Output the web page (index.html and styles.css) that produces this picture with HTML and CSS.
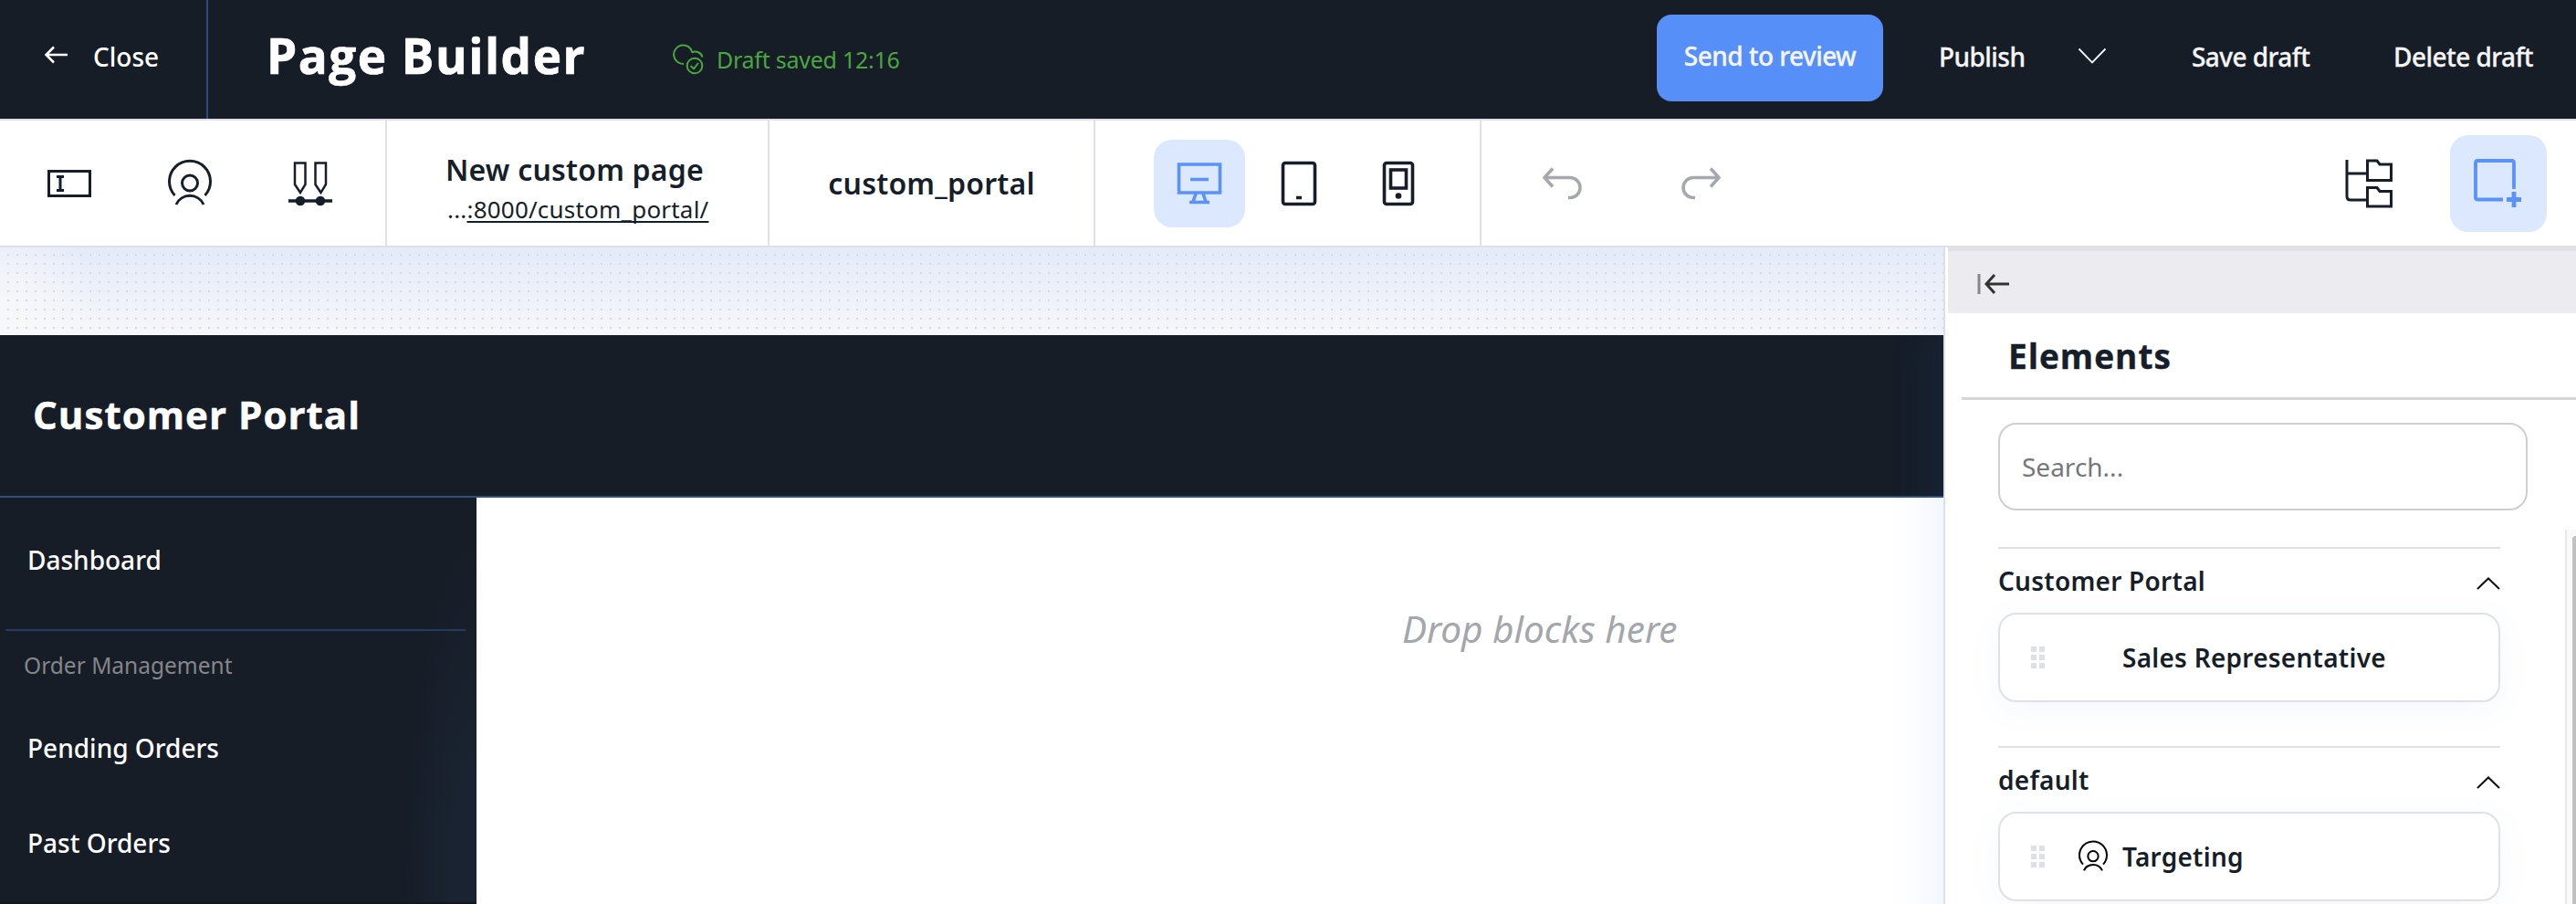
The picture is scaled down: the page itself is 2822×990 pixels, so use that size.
FILE: index.html
```html
<!DOCTYPE html>
<html lang="en">
<head>
<meta charset="utf-8">
<title>Page Builder</title>
<link rel="stylesheet" href="styles.css">
</head>
<body>
<header class="topbar">
  <div class="close">
    <svg class="close-icon" width="26" height="20" viewBox="0 0 26 20"><path d="M25 10H2M10 1.500L1.500 10L10 18.500"/></svg>
    <span>Close</span>
  </div>
  <h1 class="title">Page Builder</h1>
  <div class="status">
    <svg width="34" height="34" viewBox="0 0 34 34"><path d="M12 22A10.300 10.300 0 1 1 21.500 9.500M21 9.500A8 8 0 0 1 32.500 14.500"/><circle cx="24" cy="24" r="8.300"/><path d="M19.500 24L23 27.300L28 21"/></svg>
    <span>Draft saved 12:16</span>
  </div>
  <div class="actions">
    <div class="send">Send to review</div>
    <div class="action publish">Publish</div>
    <svg class="caret" width="32" height="19" viewBox="0 0 32 19"><path d="M1.500 1.500L16 16.500L30.500 1.500"/></svg>
    <div class="action save">Save draft</div>
    <div class="action delete">Delete draft</div>
  </div>
</header>

<nav class="toolbar">
  <div class="group tools">
    <svg width="48" height="48" viewBox="0 0 48 48"><path d="M1.500 10.500H46.500V37.500H1.500ZM10 16.500H18M10 31.500H18M14 16.500V31.500"/></svg>
    <svg width="48" height="48" viewBox="0 0 48 48"><path d="M7.500 37A22.500 22.500 0 1 1 40.500 37M9 47A16.500 16.500 0 0 1 39 47"/><circle cx="24" cy="23.500" r="8.500"/></svg>
    <svg class="pens" width="48" height="48" viewBox="0 0 48 48"><path d="M7 1.500H18.500V25L13 34L7 25ZM29.500 1.500H41V25L35.500 34L29.500 25Z"/><path class="thick" d="M0 43H48"/><circle class="fill" cx="13" cy="43" r="5.300"/><circle class="fill" cx="35" cy="43" r="5.300"/></svg>
  </div>
  <div class="group page">
    <div class="page-name">New custom page</div>
    <div class="page-url">...<u>:8000/custom_portal/</u></div>
  </div>
  <div class="group slug">custom_portal</div>
  <div class="group devices">
    <div class="device active"><svg width="48" height="46" viewBox="0 0 48 46"><path d="M1.500 2H46.500V33H1.500ZM14 18.500H34M20 34L17 43M28 34L31 43M13 43.500H35"/></svg></div>
    <svg class="tablet" width="38" height="48" viewBox="0 0 38 48"><rect x="1.500" y="1.500" width="35" height="45" rx="2.500"/><path class="thick" d="M16 39.500H22"/></svg>
    <svg class="phone" width="34" height="48" viewBox="0 0 34 48"><rect x="1.500" y="1.500" width="31" height="45" rx="2.500"/><rect x="8.500" y="9" width="17" height="20"/><circle class="fill" cx="17" cy="37.500" r="3.300"/></svg>
  </div>
  <div class="history">
    <svg width="42" height="36" viewBox="0 0 42 36"><path d="M11 1.500L2 11.500L11 21.500M2 11.500H30A10.700 10.700 0 0 1 30 33.500H28"/></svg>
    <svg width="42" height="36" viewBox="0 0 42 36"><path d="M31 1.500L40 11.500L31 21.500M40 11.500H12A10.700 10.700 0 0 0 12 33.500H14"/></svg>
  </div>
  <div class="views">
    <svg class="tree" width="54" height="54" viewBox="0 0 54 54"><path d="M3 1V41Q3 45 7 45H25M3 16H25M25.500 2H36L39 6H51.500V23.500H25.500ZM25.500 31.500H36L39 35.500H51.500V52H25.500Z"/></svg>
    <div class="add"><svg width="54" height="54" viewBox="0 0 54 54"><path d="M45 33V4Q45 2 43 2H5Q3 2 3 4V42Q3 44.500 5 44.500H33"/><path class="plus" d="M45 36V53M37 44.500H53"/></svg></div>
  </div>
</nav>

<div class="workspace">
  <main class="canvas">
    <div class="dots"></div>
    <div class="portal-header">Customer Portal</div>
    <div class="portal-body">
      <aside class="menu">
        <div class="menu-item first">Dashboard</div>
        <div class="menu-line"></div>
        <div class="menu-label">Order Management</div>
        <div class="menu-item pending">Pending Orders</div>
        <div class="menu-item past">Past Orders</div>
      </aside>
      <section class="drop">Drop blocks here</section>
    </div>
  </main>
  <aside class="panel">
    <div class="panel-bar"><svg width="36" height="24" viewBox="0 0 36 24"><path class="edge" d="M2 1V23"/><path d="M35 12H10M19 2L10 12L19 22"/></svg></div>
    <h2 class="panel-title">Elements</h2>
    <div class="panel-scroll">
      <div class="blocks">
        <div class="search">Search...</div>
        <div class="category">
          <div class="category-head"><span>Customer Portal</span><svg width="26" height="14" viewBox="0 0 26 14"><path d="M1 13L13 1.500L25 13"/></svg></div>
          <div class="block"><i class="grip"></i><span class="block-icon"></span><span>Sales Representative</span></div>
        </div>
        <div class="category">
          <div class="category-head"><span>default</span><svg width="26" height="14" viewBox="0 0 26 14"><path d="M1 13L13 1.500L25 13"/></svg></div>
          <div class="block"><i class="grip"></i><span class="block-icon"><svg width="32" height="32" viewBox="0 0 48 48"><path d="M7.500 37A22.500 22.500 0 1 1 40.500 37M9 47A16.500 16.500 0 0 1 39 47"/><circle cx="24" cy="23.500" r="8.500"/></svg></span><span>Targeting</span></div>
        </div>
      </div>
      <div class="track"><div class="thumb"></div></div>
    </div>
  </aside>
</div>
</body>
</html>
```

FILE: styles.css
```css
* { box-sizing: border-box; }
body { margin: 0; width: 2822px; height: 990px; overflow: hidden; font-family: "Noto Sans", sans-serif; font-size: 28px; line-height: 40px; color: #161e29; background: #fff; white-space: nowrap; }
svg { display: block; flex: none; fill: none; stroke: currentColor; stroke-width: 3; overflow: visible; }
h1, h2 { margin: 0; }
.fill { fill: currentColor; stroke: none; }
.thick { stroke-width: 3.5; }

.topbar { display: flex; height: 130px; color: #fff; background: #161d27; }
.close { display: flex; align-items: center; width: 228px; padding: 0 0 6px 49px; border-right: 2px solid #30497b; font-weight: 500; }
.close-icon { margin: 0 27px 4px 0; stroke-width: 2.5; }
.title { display: flex; align-items: center; width: 445px; padding: 0 0 9px 64px; font: bold 53px/70px "Open Sans", sans-serif; letter-spacing: 1.5px; -webkit-text-stroke: .7px; }
.status { display: flex; align-items: center; gap: 14px; margin-left: 64px; color: #4aa63f; font-size: 25px; letter-spacing: -.25px; }
.status svg { stroke-width: 2; }
.actions { display: flex; align-items: center; height: 127px; margin-left: auto; padding-right: 48px; font-weight: 500; letter-spacing: -.55px; color: #f4f5f6; -webkit-text-stroke: .3px; }
.send { display: flex; align-items: center; justify-content: center; width: 248px; height: 95px; padding-bottom: 5px; border-radius: 16px; background: #578ff8; }
.action { padding-bottom: 4px; }
.publish { width: 152px; margin-left: 61px; }
.caret { margin: 0 93px 5px 0; stroke-width: 1.8; }
.save { width: 221px; }
.delete { width: 152px; }

.toolbar { display: flex; height: 141px; border-top: 2px solid #dfe0e6; border-bottom: 2px solid #dfe0e6; background: #fff; }
.group { display: flex; align-items: center; border-right: 2px solid #e0e1e8; }
.tools { gap: 84px; width: 424px; padding-left: 52px; }
.pens { stroke-width: 2.5; }
.page { flex-direction: column; align-items: flex-start; width: 419px; padding: 34px 0 0 64px; letter-spacing: .2px; }
.page-name { font-size: 32px; font-weight: 600; line-height: 40px; }
.page-url { padding-left: 2px; font-size: 26px; line-height: 46px; }
.page-url u { text-underline-offset: 3px; text-decoration-thickness: 2px; text-decoration-skip-ink: none; }
.slug { justify-content: center; width: 357px; font-size: 32px; font-weight: 600; letter-spacing: .2px; }
.devices { width: 423px; padding-left: 64px; }
.device { display: flex; align-items: center; justify-content: center; width: 100px; height: 96px; border-radius: 20px; color: #5a92f9; background: #dce8fe; }
.device svg { stroke-width: 3.6; }
.tablet { margin-left: 40px; stroke-width: 3.6; }
.phone { margin-left: 73px; stroke-width: 3.6; }
.history { display: flex; align-items: center; gap: 111px; padding-left: 67px; color: #a5a8ac; }
.history svg { stroke-width: 3.5; }
.views { display: flex; align-items: center; margin-left: auto; padding-right: 32px; }
.add { display: flex; align-items: center; width: 106px; height: 106px; margin-left: 62px; padding-left: 25px; border-radius: 20px; color: #5a92f9; background: #dce8fe; }
.add svg { stroke-width: 3.8; }
.add .plus { stroke-width: 4.8; }

.workspace { display: flex; height: 719px; }
.canvas { display: flex; flex-direction: column; width: 2129px; }
.dots { height: 96px; background: conic-gradient(from 0deg at 2px 2px, transparent 270deg, #d3d6e3 0) 8px 7px / 10px 10px, radial-gradient(110px 150px at 0 100%, #f8f8fa, transparent), linear-gradient(#e4eaf9, #f6f7fa); }
.portal-header { height: 178px; padding: 47px 0 0 36px; border-bottom: 2px solid #304c82; color: #fff; background: #161d27; font: bold 42px/80px "Open Sans", sans-serif; letter-spacing: 1.05px; -webkit-text-stroke: .5px; }
.portal-body { display: flex; flex: 1; }
.menu { width: 522px; border-bottom: 2px solid #14161e; color: #fff; background: radial-gradient(80px 400px at 100% 100%, #1a2331 35%, transparent), #161d27; }
.menu-item { padding-left: 30px; font-weight: 500; }
.first { padding-top: 48px; }
.menu-line { height: 2px; margin: 56px 12px 0 6px; background: #253866; }
.menu-label { margin-top: 18px; padding-left: 26px; font-size: 24.500px; color: #85868a; }
.pending { margin-top: 50px; }
.past { margin-top: 64px; }
.drop { flex: 1; padding: 114px 0 0 1014px; font-size: 40.500px; font-style: italic; line-height: 60px; color: #a3a6ab; }

.panel { display: flex; flex-direction: column; width: 693px; border-left: 2px solid #dfe0e6; background: #fff; box-shadow: 0 80px 60px rgba(60, 120, 240, .12); clip-path: inset(0 0 0 -100px); }
.panel-bar { height: 72px; margin-left: 3px; padding: 24px 0 0 32px; border-top: 4px solid #e0e0e6; background: #ecebf0; color: #333; }
.edge { color: #888; }
.panel-title { height: 95px; margin-left: 18px; padding: 19px 0 0 51px; border-bottom: 3px solid #d5d5d6; font: bold 37px/56px "Open Sans", sans-serif; letter-spacing: 1px; -webkit-text-stroke: .4px; }
.panel-scroll { display: flex; justify-content: space-between; flex: 1; min-height: 0; }
.blocks { padding: 25px 0 0 58px; }
.search { width: 580px; height: 96px; padding: 26px 0 0 24px; border: 2px solid #cfcfd1; border-radius: 20px; color: #74777b; }
.category { width: 550px; height: 178px; margin-top: 40px; border-top: 2px solid #e0e0e8; letter-spacing: .25px; }
.category-head { display: flex; justify-content: space-between; height: 70px; padding-top: 15px; font-weight: 600; }
.category-head svg { margin-top: 16px; stroke-width: 2; color: #111; }
.block { display: flex; align-items: center; height: 98px; padding-left: 34px; border: 2px solid #e0e0e7; border-radius: 20px; font-weight: 600; background: #fff; box-shadow: 0 8px 36px rgba(80, 120, 240, .05); }
.grip { width: 16px; height: 24px; background: conic-gradient(from 0deg at 6px 6px, transparent 270deg, #dfe0e6 0) 0 0 / 9px 9px; }
.block-icon { display: flex; width: 84px; padding-left: 36px; color: #000; }
.track { width: 12px; height: 410px; margin-top: 142px; padding: 7px 0 0 6px; border-left: 2px solid #e8e8e8; background: #fafafa; }
.thumb { height: 410px; border-radius: 6px 0 0 0; background: #c1c1c1; }
```
